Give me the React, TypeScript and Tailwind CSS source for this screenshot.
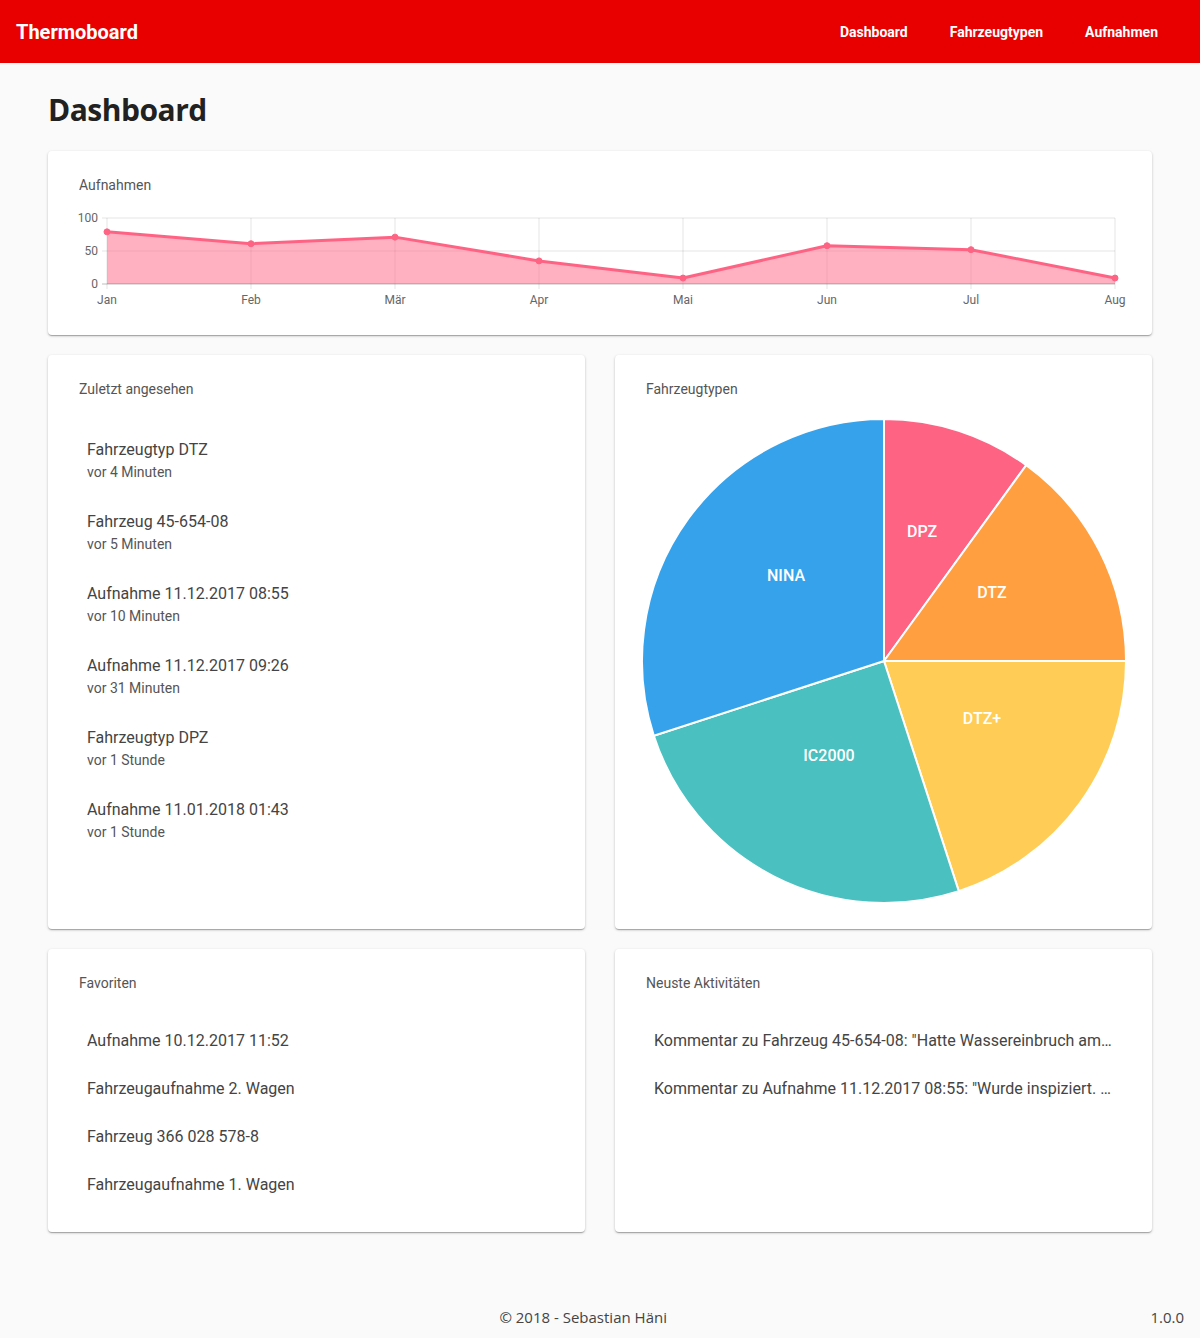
const months = ["Jan", "Feb", "Mär", "Apr", "Mai", "Jun", "Jul", "Aug"];
const values = [79, 61, 71, 35, 9, 58, 52, 9];

const recent = [
  { title: "Fahrzeugtyp DTZ", time: "vor 4 Minuten" },
  { title: "Fahrzeug 45-654-08", time: "vor 5 Minuten" },
  { title: "Aufnahme 11.12.2017 08:55", time: "vor 10 Minuten" },
  { title: "Aufnahme 11.12.2017 09:26", time: "vor 31 Minuten" },
  { title: "Fahrzeugtyp DPZ", time: "vor 1 Stunde" },
  { title: "Aufnahme 11.01.2018 01:43", time: "vor 1 Stunde" },
];

const favorites = [
  "Aufnahme 10.12.2017 11:52",
  "Fahrzeugaufnahme 2. Wagen",
  "Fahrzeug 366 028 578-8",
  "Fahrzeugaufnahme 1. Wagen",
];

const activities = [
  'Kommentar zu Fahrzeug 45-654-08: "Hatte Wassereinbruch am Dach, wurde repariert"',
  'Kommentar zu Aufnahme 11.12.2017 08:55: "Wurde inspiziert. Alles in Ordnung"',
];

const slices = [
  { label: "DPZ", value: 10, color: "#ff6384", lx: 281, ly: 114 },
  { label: "DTZ", value: 15, color: "#ff9f40", lx: 351, ly: 175 },
  { label: "DTZ+", value: 20, color: "#ffcd56", lx: 341, ly: 301 },
  { label: "IC2000", value: 25, color: "#4bc0c0", lx: 188, ly: 338 },
  { label: "NINA", value: 30, color: "#36a2eb", lx: 145, ly: 158 },
];

const cardClass =
  "bg-white rounded-sm shadow-[0_1px_3px_rgba(0,0,0,0.2),0_1px_1px_rgba(0,0,0,0.14),0_2px_1px_-1px_rgba(0,0,0,0.12)]";

function CardTitle({ children }: { children: React.ReactNode }) {
  return <h3 className="px-[31px] text-sm leading-5 text-[#555]">{children}</h3>;
}

function LineChart() {
  const xs = months.map((_, i) => 59 + i * 144);
  const y = (v: number) => 74 - v * 0.66;
  const pts = values.map((v, i) => `${xs[i]},${y(v)}`).join(" ");
  const area = `M${xs[0]},74 L${pts.split(" ").join(" L")} L${xs[7]},74 Z`;

  return (
    <svg width="1104" height="100" viewBox="0 0 1104 100" className="block mt-[15px]">
      {[8, 41].map((gy) => (
        <line key={gy} x1="54" x2="1067" y1={gy} y2={gy} stroke="rgba(0,0,0,0.1)" />
      ))}
      {xs.map((x) => (
        <line key={x} x1={x} x2={x} y1="8" y2="79" stroke="rgba(0,0,0,0.1)" />
      ))}
      <path d={area} fill="rgba(255,99,132,0.5)" />
      <line x1="54" x2="1067" y1="74" y2="74" stroke="rgba(0,0,0,0.25)" />
      <polyline points={pts} fill="none" stroke="#ff6384" strokeWidth="3" strokeLinejoin="round" />
      {values.map((v, i) => (
        <circle key={i} cx={xs[i]} cy={y(v)} r="3" fill="#ff6384" stroke="#ff6384" />
      ))}
      {[
        ["100", 8],
        ["50", 41],
        ["0", 74],
      ].map(([t, gy]) => (
        <text key={t} x="50" y={Number(gy) + 4} textAnchor="end" fontSize="12" fill="#666" fontFamily="Roboto, sans-serif">
          {t}
        </text>
      ))}
      {months.map((m, i) => (
        <text key={m} x={xs[i]} y="94" textAnchor="middle" fontSize="12" fill="#666" fontFamily="Roboto, sans-serif">
          {m}
        </text>
      ))}
    </svg>
  );
}

function PieChart() {
  const cx = 243;
  const cy = 243;
  const r = 242;
  const total = slices.reduce((s, d) => s + d.value, 0);
  let start = -90;
  const pt = (a: number) => {
    const rad = (a * Math.PI) / 180;
    return `${(cx + r * Math.cos(rad)).toFixed(2)},${(cy + r * Math.sin(rad)).toFixed(2)}`;
  };

  return (
    <svg width="486" height="486" viewBox="0 0 486 486" className="block mx-auto mt-[19px]">
      {slices.map((s) => {
        const sweep = (s.value / total) * 360;
        const d = `M${cx},${cy} L${pt(start)} A${r},${r} 0 ${sweep > 180 ? 1 : 0} 1 ${pt(start + sweep)} Z`;
        start += sweep;
        return <path key={s.label} d={d} fill={s.color} stroke="#fff" strokeWidth="2" />;
      })}
      {slices.map((s) => (
        <text
          key={s.label}
          x={s.lx}
          y={s.ly + 5}
          textAnchor="middle"
          fontSize="16"
          fontWeight="500"
          fill="#fff"
          fontFamily="Roboto, sans-serif"
        >
          {s.label}
        </text>
      ))}
    </svg>
  );
}

export default function App() {
  return (
    <div className="min-h-[1338px] bg-[#fafafa] font-['Roboto',sans-serif] flex flex-col">
      <header className="h-[63px] bg-[#e80000] flex items-center pl-4 pr-[21px] text-white">
        <span className="text-xl font-bold">Thermoboard</span>
        <nav className="ml-auto flex">
          {["Dashboard", "Fahrzeugtypen", "Aufnahmen"].map((n) => (
            <a key={n} className="px-[21px] text-sm font-bold cursor-pointer">
              {n}
            </a>
          ))}
        </nav>
      </header>

      <main className="mx-12 flex-1">
        <h1 className="mt-[27px] mb-[21px] text-[30px] leading-10 font-bold text-[#212121] font-['Open_Sans',sans-serif] tracking-[-0.5px]">
          Dashboard
        </h1>

        <section className={`${cardClass} pt-6 pb-[25px]`}>
          <CardTitle>Aufnahmen</CardTitle>
          <LineChart />
        </section>

        <div className="grid grid-cols-2 gap-x-[30px] gap-y-[20px] mt-5">
          <section className={`${cardClass} pt-6`}>
            <CardTitle>Zuletzt angesehen</CardTitle>
            <ul className="px-[31px] mt-[37px]">
              {recent.map((r) => (
                <li key={r.title + r.time} className="h-[72px] px-2 pt-[2px]">
                  <p className="text-base leading-6 text-[#444]">{r.title}</p>
                  <p className="text-sm leading-5 text-[#555]">{r.time}</p>
                </li>
              ))}
            </ul>
          </section>

          <section className={`${cardClass} pt-6 pb-[25px]`}>
            <CardTitle>Fahrzeugtypen</CardTitle>
            <PieChart />
          </section>

          <section className={`${cardClass} pt-6 pb-[23px]`}>
            <CardTitle>Favoriten</CardTitle>
            <ul className="px-[31px] mt-6">
              {favorites.map((f) => (
                <li key={f} className="h-12 px-2 flex items-center text-base text-[#444]">
                  {f}
                </li>
              ))}
            </ul>
          </section>

          <section className={`${cardClass} pt-6 pb-[23px]`}>
            <CardTitle>Neuste Aktivitäten</CardTitle>
            <ul className="px-[31px] mt-6">
              {activities.map((a) => (
                <li key={a} className="h-12 px-2 flex items-center text-base text-[#444]">
                  <span className="truncate">{a}</span>
                </li>
              ))}
            </ul>
          </section>
        </div>
      </main>

      <footer className="h-[42px] px-4 flex items-center text-[15px] text-[#444] font-['Open_Sans',sans-serif]">
        <span className="flex-1 text-center">© 2018 - Sebastian Häni</span>
        <span>1.0.0</span>
      </footer>
    </div>
  );
}
